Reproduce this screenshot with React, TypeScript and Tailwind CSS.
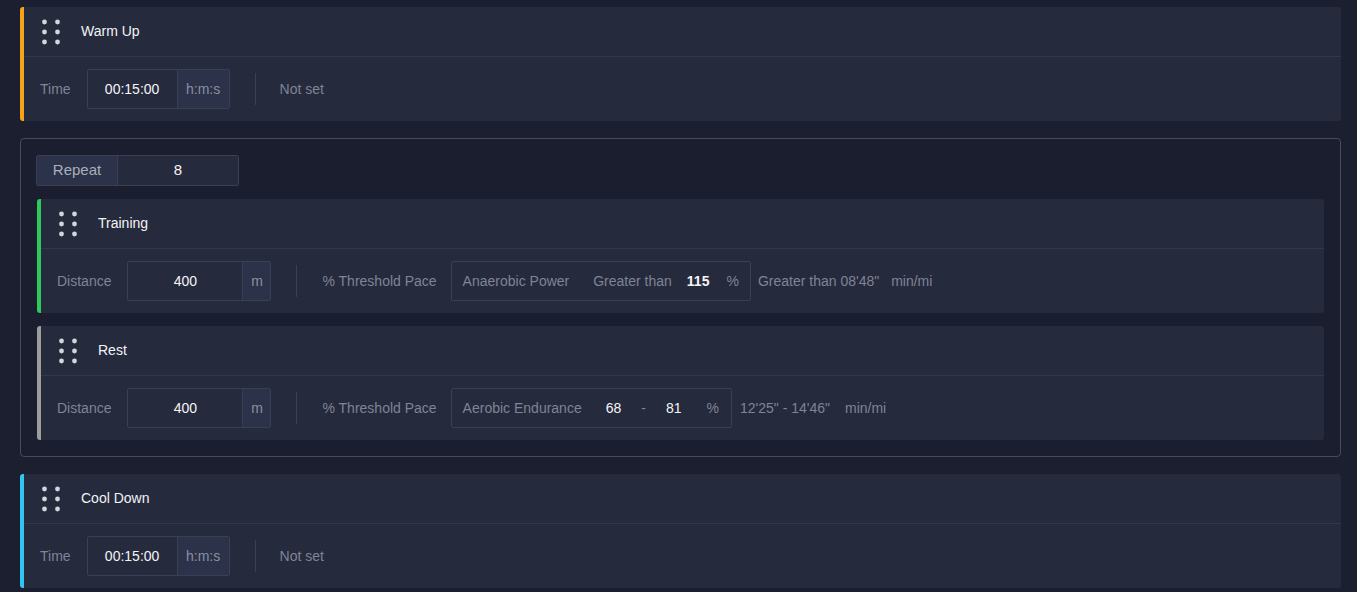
const font = { fontFamily: '"Liberation Sans", Arial, sans-serif' };

function Dots() {
  return (
    <svg width="18" height="26" viewBox="0 0 18 26" className="shrink-0">
      {[3, 13, 23].map((cy) =>
        [2.5, 15.5].map((cx) => <circle key={`${cx}-${cy}`} cx={cx} cy={cy} r="2.4" fill="#d4d6dc" />)
      )}
    </svg>
  );
}

function Card({ title, bar, children }: { title: string; bar: string; children: React.ReactNode }) {
  return (
    <div className={`flex flex-col rounded-[3px] bg-[#262a3d] border-l-[4px] ${bar}`}>
      <div className="flex items-center h-[50px] border-b border-[#323749] pl-[18px]">
        <Dots />
        <span className="ml-[21px] text-[14px] text-[#f2f3f5]">{title}</span>
      </div>
      <div className="flex items-center h-[64px] pl-[16px] text-[14px]">{children}</div>
    </div>
  );
}

function ValueInput({ value, unit, valueW, unitW }: { value: string; unit: string; valueW: string; unitW: string }) {
  return (
    <div className="flex h-[40px] rounded-[2px] border border-[#3a4054]">
      <div className={`flex items-center justify-center ${valueW} text-[#f4f5f7]`}>{value}</div>
      <div className={`flex items-center justify-center ${unitW} bg-[#2c3249] border-l border-[#3a4054] text-[#8a8fa0]`}>
        {unit}
      </div>
    </div>
  );
}

function Sep() {
  return <div className="w-px h-[32px] bg-[#3a4054] ml-[25px] mr-[24px]" />;
}

function TimeCard({ title, bar }: { title: string; bar: string }) {
  return (
    <Card title={title} bar={bar}>
      <span className="text-[#7f8496] mr-[16px]">Time</span>
      <ValueInput value="00:15:00" unit="h:m:s" valueW="w-[89px]" unitW="w-[52px]" />
      <Sep />
      <span className="text-[#7f8496]">Not set</span>
    </Card>
  );
}

export default function App() {
  return (
    <div style={font} className="min-h-[592px] bg-[#1b1f2f] pl-[20px] pr-[16px] pt-[7px] flex flex-col gap-[17px]">
      <TimeCard title="Warm Up" bar="border-[#f5a31a]" />

      <div className="rounded-[4px] border border-[#464c5e] bg-[#1a1e2e] pt-[16px] pb-[16px] px-[16px] flex flex-col gap-[13px]">
        <div className="-ml-[1px] flex h-[31px] w-[203px] rounded-[2px] border border-[#3a4054] text-[15px]">
          <div className="flex items-center justify-center w-[81px] bg-[#2c3249] text-[#a9aebb] border-r border-[#3a4054]">
            Repeat
          </div>
          <div className="flex-1 flex items-center justify-center bg-[#262a3d] text-[#f4f5f7]">8</div>
        </div>

        <Card title="Training" bar="border-[#2fcb5a]">
          <span className="text-[#7f8496] mr-[16px]">Distance</span>
          <ValueInput value="400" unit="m" valueW="w-[114px]" unitW="w-[28px]" />
          <Sep />
          <span className="text-[#7f8496] ml-[1px]">% Threshold Pace</span>
          <div className="flex items-center h-[40px] ml-[14px] pl-[11px] pr-[11px] rounded-[2px] border border-[#3a4054] text-[#7f8496]">
            <span>Anaerobic Power</span>
            <span className="ml-[24px]">Greater than</span>
            <span className="ml-[15px] text-[#f4f5f7] font-bold">115</span>
            <span className="ml-[17px]">%</span>
          </div>
          <span className="ml-[7px] text-[#7f8496]">Greater than 08'48"</span>
          <span className="ml-[12px] text-[#7f8496]">min/mi</span>
        </Card>

        <Card title="Rest" bar="border-[#9d9d9f]">
          <span className="text-[#7f8496] mr-[16px]">Distance</span>
          <ValueInput value="400" unit="m" valueW="w-[114px]" unitW="w-[28px]" />
          <Sep />
          <span className="text-[#7f8496] ml-[1px]">% Threshold Pace</span>
          <div className="flex items-center h-[40px] ml-[14px] pl-[11px] pr-[12px] rounded-[2px] border border-[#3a4054] text-[#7f8496]">
            <span>Aerobic Endurance</span>
            <span className="ml-[24px] text-[#f4f5f7]">68</span>
            <span className="ml-[20px]">-</span>
            <span className="ml-[20px] text-[#f4f5f7]">81</span>
            <span className="ml-[25px]">%</span>
          </div>
          <span className="ml-[8px] text-[#7f8496]">12'25" - 14'46"</span>
          <span className="ml-[15px] text-[#7f8496]">min/mi</span>
        </Card>
      </div>

      <TimeCard title="Cool Down" bar="border-[#34c5f3]" />
    </div>
  );
}
